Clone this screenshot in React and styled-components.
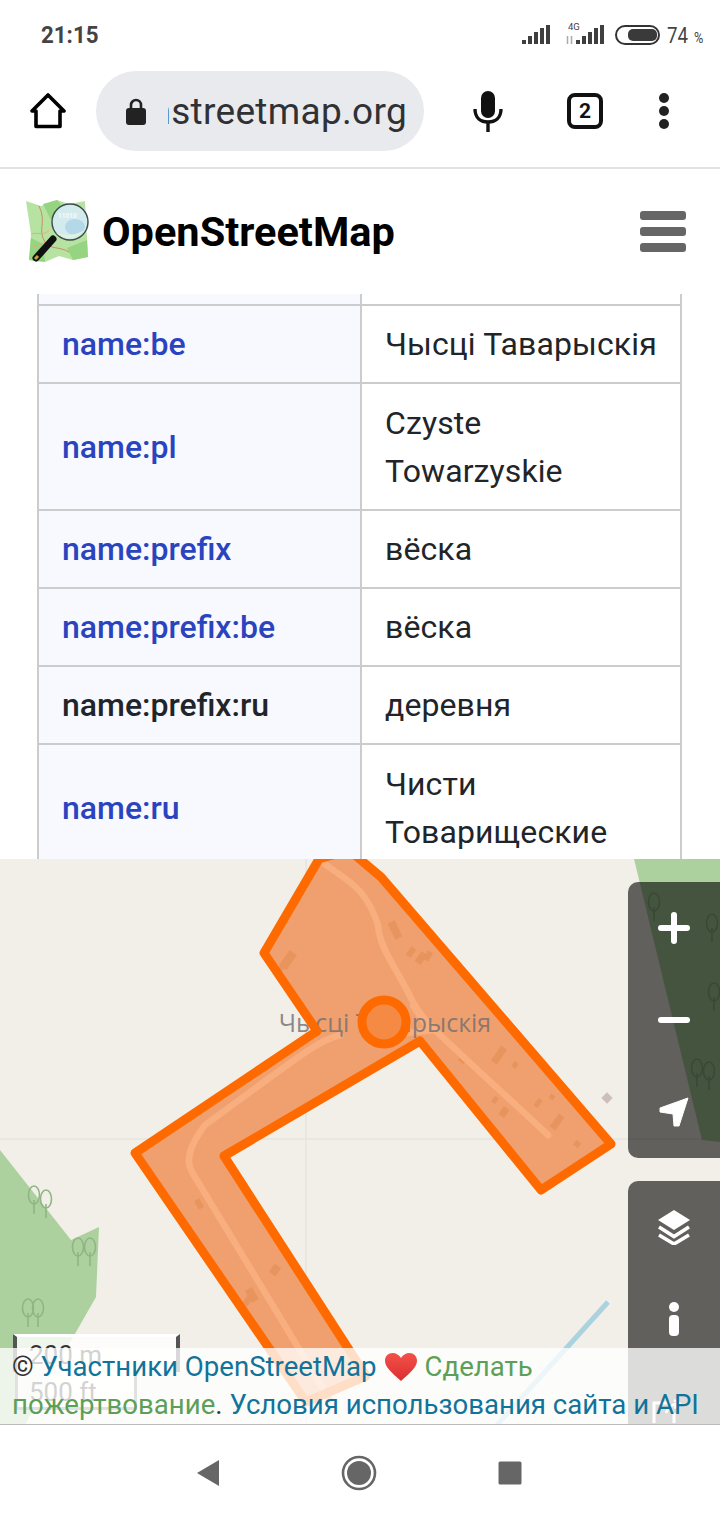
import React from "react"
import styled, { createGlobalStyle } from "styled-components"

const GlobalStyle = createGlobalStyle`
  html, body {
    margin: 0;
    padding: 0;
    background: #fff;
    font-family: Roboto, "Liberation Sans", sans-serif;
  }
`

const Page = styled.div`
  display: flex;
  flex-direction: column;
  width: 720px;
  height: 1520px;
  overflow: hidden;
  background: #fff;
`

const StatusBar = styled.div`
  display: flex;
  align-items: center;
  justify-content: space-between;
  height: 68px;
  padding: 2px 8px 0 41px;
  box-sizing: border-box;
  color: #444;
`

const Time = styled.span`
  font-size: 23px;
  font-weight: 700;
  transform: scaleX(0.97);
  transform-origin: left center;
`

const StatusIcons = styled.div`
  display: flex;
  align-items: center;
  gap: 7px;
`

const Battery = styled.span`
  width: 45px;
  font-size: 22px;
  white-space: nowrap;
  transform: scaleX(0.85);
  transform-origin: left center;
  small {
    font-size: 15px;
    margin-left: 7px;
  }
`

const Toolbar = styled.div`
  display: flex;
  align-items: center;
  height: 101px;
  box-sizing: border-box;
  padding: 0 0 13px 30px;
  border-bottom: 2px solid #e2e2e2;
`

const UrlPill = styled.div`
  display: flex;
  align-items: center;
  width: 328px;
  height: 80px;
  margin-left: 30px;
  padding-left: 29px;
  box-sizing: border-box;
  border-radius: 40px;
  background: #e9eaee;
`

const UrlClip = styled.div`
  display: flex;
  justify-content: flex-end;
  width: 239px;
  margin-left: 21px;
  overflow: hidden;
  font-size: 37px;
  color: #303134;
  white-space: nowrap;
  letter-spacing: 0.3px;
`

const TabCount = styled.div`
  display: flex;
  align-items: center;
  justify-content: center;
  width: 36px;
  height: 36px;
  margin-left: 64px;
  box-sizing: border-box;
  border: 4px solid #111;
  border-radius: 8px;
  font-size: 21px;
  font-weight: 700;
  color: #111;
`

const MicSlot = styled.div`
  display: flex;
  margin-left: 49px;
`

const MenuDots = styled.div`
  display: flex;
  flex-direction: column;
  gap: 3px;
  margin-left: 56px;
  i {
    width: 10px;
    height: 10px;
    border-radius: 50%;
    background: #222;
  }
`

const SiteHeader = styled.header`
  display: flex;
  align-items: center;
  height: 125px;
  padding: 0 34px 0 25px;
  box-sizing: border-box;
`

const SiteTitle = styled.div`
  margin-left: 11px;
  font-size: 41.5px;
  font-weight: 700;
  color: #000;
  flex: 1;
`

const Burger = styled.div`
  display: flex;
  flex-direction: column;
  gap: 7px;
  i {
    width: 46px;
    height: 9px;
    border-radius: 3px;
    background: #666;
  }
`

const TableArea = styled.div`
  height: 565px;
  padding-left: 37px;
  overflow: hidden;
`

const TagTable = styled.table`
  width: 645px;
  border-collapse: collapse;
  table-layout: fixed;
  font-size: 32px;
  line-height: 48px;
  color: #212529;
`

const Row = styled.tr`
  height: ${(p) => (p.$tall ? "127px" : p.$stub ? "11px" : "78px")};
`

const Key = styled.th`
  width: 323px;
  box-sizing: border-box;
  padding: 0 23px;
  border: 2px solid #ccc;
  ${(p) => p.$stub && "border-top: none;"}
  background: #f7f9fe;
  text-align: left;
  font-weight: 500;
  color: ${(p) => (p.$plain ? "#212529" : "#2a44bf")};
`

const Value = styled.td`
  padding: 0 22px 0 23px;
  border: 2px solid #ccc;
  ${(p) => p.$stub && "border-top: none;"}
  letter-spacing: 0.1px;
`

const MapArea = styled.div`
  position: relative;
  height: 566px;
  overflow: hidden;
  background: #f2efe9;
`

const MapDrawing = styled.svg`
  position: absolute;
  left: 0;
  top: 0;
`

const ControlPanel = styled.div`
  position: absolute;
  right: 0;
  top: ${(p) => p.$top}px;
  display: flex;
  flex-direction: column;
  width: 92px;
  height: ${(p) => p.$height}px;
  border-radius: ${(p) => (p.$open ? "10px 0 0 0" : "10px 0 0 10px")};
  background: rgba(0, 0, 0, 0.6);
`

const ControlButton = styled.div`
  display: flex;
  align-items: center;
  justify-content: center;
  width: 92px;
  height: 92px;
  flex: none;
  padding-right: ${(p) => p.$nudge || 0}px;
  box-sizing: border-box;
`

const ScaleLine = styled.div`
  position: absolute;
  left: ${(p) => p.$left}px;
  top: ${(p) => p.$top}px;
  width: ${(p) => p.$width}px;
  height: ${(p) => p.$height}px;
  box-sizing: border-box;
  padding: ${(p) => (p.$upper ? "0" : "2px")} 0 0 ${(p) => (p.$upper ? "12px" : "11px")};
  background: rgba(255, 255, 255, 0.8);
  border: solid #555;
  border-width: ${(p) => (p.$upper ? "3px 4px 0 4px" : "0 3px 3px 3px")};
  border-color: ${(p) => (p.$upper ? "#fff #555 #555 #555" : "#777")};
  font-size: 26px;
  line-height: 36px;
  color: #333;
`

const Attribution = styled.div`
  position: absolute;
  left: 0;
  right: 0;
  bottom: 0;
  height: 77px;
  padding-left: 12px;
  box-sizing: border-box;
  border-bottom: 1px solid #bbb;
  background: rgba(255, 255, 255, 0.78);
  font-size: 27.6px;
  line-height: 38px;
  color: #333;
`

const OsmLink = styled.span`
  color: ${(p) => (p.$green ? "#5d9f58" : "#11739a")};
`

const Heart = styled.svg`
  vertical-align: -5px;
  margin: 0 8px 0 8px;
`

const NavBar = styled.nav`
  display: flex;
  align-items: center;
  justify-content: center;
  height: 95px;
  padding-right: 2px;
  box-sizing: border-box;
  gap: 121px;
`

const rows = [
  { key: "name:be", value: "Чысці Таварыскія" },
  { key: "name:pl", value: "Czyste Towarzyskie", tall: true },
  { key: "name:prefix", value: "вёска" },
  { key: "name:prefix:be", value: "вёска" },
  { key: "name:prefix:ru", value: "деревня", plain: true },
  { key: "name:ru", value: "Чисти Товарищеские", tall: true },
]

// map shapes are in page coordinates, the viewBox shifts them into place
const outline =
  "319,859 349,850 381,877 611,1144 541,1190 420,1041 224,1156 366,1376 306,1402 135,1153 317,1031 264,953"

const trees = [
  [654, 907], [712, 928], [714, 997], [697, 1073], [709, 1076],
  [34, 1200], [46, 1204], [78, 1252], [90, 1252], [28, 1313], [38, 1313],
]

const houses = [
  [395, 930, 8, 18, -25], [421, 958, 7, 12, 35], [411, 952, 6, 10, 35], [428, 956, 6, 10, 30],
  [288, 960, 9, 18, 35], [281, 968, 5, 5, 35], [499, 1055, 7, 18, 35], [463, 1059, 7, 8, 35],
  [515, 1065, 5, 6, 35], [538, 1103, 5, 9, 35], [552, 1097, 5, 5, 35], [557, 1122, 7, 16, 35],
  [495, 1100, 5, 7, 35], [504, 1112, 7, 10, 35], [577, 1144, 6, 6, 40],
  [199, 1204, 6, 10, -30], [275, 1270, 8, 10, 35], [252, 1295, 8, 14, -30], [248, 1300, 6, 12, 35],
]

const MapCanvas = () => (
  <MapDrawing width="720" height="566" viewBox="0 859 720 566">
    <g stroke="#e7e4dd" strokeWidth="1.5">
      <line x1="0" y1="1139" x2="720" y2="1139" />
      <line x1="306" y1="859" x2="306" y2="1425" />
    </g>
    <polygon points="634,859 720,859 720,1142 702,1140" fill="#add19e" />
    <polygon
      points="0,1150 71,1240 99,1227 96,1297 60,1360 25,1425 0,1425"
      fill="#add19e"
    />
    <line x1="608" y1="1302" x2="497" y2="1425" stroke="#aad3df" strokeWidth="5" />
    {trees.map(([x, y], i) => (
      <g key={i} fill="none" stroke="#8fb583" strokeWidth="1.6">
        <ellipse cx={x} cy={y - 5} rx="5.5" ry="9" />
        <line x1={x} y1={y} x2={x} y2={y + 14} />
      </g>
    ))}
    <rect x="603" y="1094" width="8" height="8" transform="rotate(45 607 1098)" fill="#cdbfb8" />
    <polygon points={outline} fill="#f0a06e" />
    {houses.map(([x, y, w, h, r], i) => (
      <rect
        key={i}
        x={x - w / 2}
        y={y - h / 2}
        width={w}
        height={h}
        transform={`rotate(${r} ${x} ${y})`}
        fill="#e8945e"
      />
    ))}
    <g fill="none" stroke="#f8ae7e" strokeWidth="6.5" strokeLinecap="round" strokeLinejoin="round">
      <path d="M325 864 C345 880 365 885 378 925 C380 950 395 965 412 1000 C425 1025 430 1025 548 1135" />
      <path d="M340 1035 C320 1040 310 1048 205 1125 C190 1145 185 1160 192 1172 L330 1400" />
      <path d="M413 1006 L427 1026 M405 1033 L435 1030" />
    </g>
    <text
      x="385"
      y="1032"
      textAnchor="middle"
      fontFamily="'Open Sans', sans-serif"
      fontSize="25"
      fill="#6f6d70"
      fillOpacity="0.8"
    >
      Чысці Таварыскія
    </text>
    <polygon
      points={outline}
      fill="none"
      stroke="#ff6a00"
      strokeWidth="9"
      strokeLinejoin="round"
    />
    <circle cx="384" cy="1022" r="22" fill="#f58a45" stroke="#ff6a00" strokeWidth="9" />
  </MapDrawing>
)

const HomeIcon = () => (
  <svg width="36" height="36" viewBox="0 0 36 36" fill="none">
    <path d="M18 2 L34 18 H30 V33.5 H6 V18 H2 Z" stroke="#000" strokeWidth="3.6" strokeLinejoin="round" />
  </svg>
)

const LockIcon = () => (
  <svg width="22" height="27" viewBox="0 0 22 27">
    <path d="M6 11 V7 a5 5 0 0 1 10 0 V11" fill="none" stroke="#222" strokeWidth="2.6" />
    <rect x="1" y="10" width="20" height="17" rx="3" fill="#222" />
  </svg>
)

const MicIcon = () => (
  <svg width="30" height="41" viewBox="0 0 30 41" fill="none">
    <rect x="8" y="0" width="14" height="27" rx="7" fill="#111" />
    <path d="M2 18 C2 27 8 31 15 31 C22 31 28 27 28 18" stroke="#111" strokeWidth="3.4" />
    <line x1="15" y1="31" x2="15" y2="41" stroke="#111" strokeWidth="3.4" />
  </svg>
)

const SignalBars = () => (
  <g fill="#3f3f3f">
    <rect x="0" y="15" width="4" height="4" />
    <rect x="6" y="11" width="4" height="8" />
    <rect x="12" y="7" width="4" height="12" />
    <rect x="18" y="3" width="4" height="16" />
    <rect x="24" y="0" width="4" height="19" />
  </g>
)

const StatusGlyphs = () => (
  <svg width="138" height="26" viewBox="0 0 138 26">
    <g transform="translate(0 3)">
      <SignalBars />
    </g>
    <text x="46" y="8" fontSize="9.5" fontFamily="Roboto, sans-serif" fill="#444">4G</text>
    <path d="M45.5 14 v8 M49.5 14 v8" stroke="#aaa" strokeWidth="1.5" />
    <g transform="translate(54 3)">
      <SignalBars />
    </g>
    <rect x="94" y="4" width="43" height="18" rx="9" fill="none" stroke="#333" strokeWidth="2" />
    <rect x="106" y="7" width="29" height="12" rx="5" fill="#3a3a3a" />
  </svg>
)

const OsmLogo = () => (
  <svg width="66" height="68" viewBox="0 0 66 68">
    <path d="M1 3 L16 8 L32 2 L44 6 L60 3 L63 59 L48 62 L34 58 L20 64 L4 62 L6 36 Z" fill="#b6e3a2" />
    <path d="M18 6 L26 22 L36 6 L32 2 Z M42 50 L62 42 L63 59 L48 62 Z M6 40 L18 46 L20 64 L4 62 Z" fill="#95d480" />
    <path d="M14 8 C22 24 12 32 20 44 C26 52 34 48 44 54" fill="none" stroke="#c8905c" strokeWidth="1" />
    <path d="M6 36 C14 34 20 38 24 32 M20 44 L6 50" fill="none" stroke="#e0b070" strokeWidth="1" />
    <line x1="28" y1="41" x2="11" y2="60" stroke="#111" strokeWidth="7" strokeLinecap="round" />
    <line x1="13" y1="58" x2="10" y2="61" stroke="#c7a43a" strokeWidth="3" />
    <circle cx="45" cy="24" r="18" fill="#d4ebee" stroke="#3c4a4a" strokeWidth="1.4" />
    <ellipse cx="50" cy="29" rx="10" ry="8" fill="#b4d8e8" />
    <path d="M31 35 C38 42 52 42 60 31 C52 38 40 38 31 35 Z" fill="#e0f4da" />
    <text x="33" y="20" fontSize="6.5" fontWeight="700" fontFamily="Roboto, sans-serif" fill="#f4fafa">11010</text>
  </svg>
)

const PlusIcon = () => (
  <svg width="32" height="32" viewBox="0 0 32 32">
    <path d="M16 3 V29 M3 16 H29" stroke="#fff" strokeWidth="6" strokeLinecap="round" />
  </svg>
)

const MinusIcon = () => (
  <svg width="32" height="12" viewBox="0 0 32 12">
    <path d="M3 6 H29" stroke="#fff" strokeWidth="6" strokeLinecap="round" />
  </svg>
)

const LocateIcon = () => (
  <svg width="30" height="30" viewBox="0 0 30 30">
    <path d="M29 1 L20 29 L15 29 L14 17 L1 15 L1 11 Z" fill="#fff" stroke="#fff" strokeLinejoin="round" />
  </svg>
)

const LayersIcon = () => (
  <svg width="34" height="36" viewBox="0 0 34 36">
    <path d="M17 1 L33 11 L17 21 L1 11 Z" fill="#fff" />
    <path d="M2 18 L17 27.5 L32 18 M2 26 L17 35 L32 26" fill="none" stroke="#fff" strokeWidth="3.6" />
  </svg>
)

const InfoIcon = () => (
  <svg width="12" height="34" viewBox="0 0 12 34">
    <circle cx="6" cy="5" r="5" fill="#fff" />
    <rect x="1" y="13" width="10" height="21" rx="4" fill="#fff" />
  </svg>
)

const ShareIcon = () => (
  <svg width="30" height="24" viewBox="0 0 30 24" fill="none">
    <path d="M18 4 H2 V24 M22 24 V14" stroke="#fff" strokeWidth="3" />
    <path d="M14 14 C16 7 20 5 26 5 M22 1 L28 5 L22 9" stroke="#fff" strokeWidth="2.5" />
  </svg>
)

const App = () => (
  <Page>
    <GlobalStyle />
    <StatusBar>
      <Time>21:15</Time>
      <StatusIcons>
        <StatusGlyphs />
        <Battery>
          74<small>%</small>
        </Battery>
      </StatusIcons>
    </StatusBar>

    <Toolbar>
      <HomeIcon />
      <UrlPill>
        <LockIcon />
        <UrlClip>openstreetmap.org</UrlClip>
      </UrlPill>
      <MicSlot>
        <MicIcon />
      </MicSlot>
      <TabCount>2</TabCount>
      <MenuDots>
        <i />
        <i />
        <i />
      </MenuDots>
    </Toolbar>

    <SiteHeader>
      <OsmLogo />
      <SiteTitle>OpenStreetMap</SiteTitle>
      <Burger>
        <i />
        <i />
        <i />
      </Burger>
    </SiteHeader>

    <TableArea>
      <TagTable>
        <tbody>
          <Row $stub>
            <Key $stub />
            <Value $stub />
          </Row>
          {rows.map((row) => (
            <Row key={row.key} $tall={row.tall}>
              <Key $plain={row.plain}>{row.key}</Key>
              <Value>{row.value}</Value>
            </Row>
          ))}
        </tbody>
      </TagTable>
    </TableArea>

    <MapArea>
      <MapCanvas />
      <ControlPanel $top={23} $height={276}>
        <ControlButton>
          <PlusIcon />
        </ControlButton>
        <ControlButton>
          <MinusIcon />
        </ControlButton>
        <ControlButton>
          <LocateIcon />
        </ControlButton>
      </ControlPanel>
      <ControlPanel $top={322} $height={244} $open>
        <ControlButton>
          <LayersIcon />
        </ControlButton>
        <ControlButton>
          <InfoIcon />
        </ControlButton>
        <ControlButton $nudge={14}>
          <ShareIcon />
        </ControlButton>
      </ControlPanel>
      <ScaleLine $left={13} $top={475} $width={167} $height={38} $upper>
        200 m
      </ScaleLine>
      <ScaleLine $left={15} $top={513} $width={122} $height={38}>
        500 ft
      </ScaleLine>
      <Attribution>
        © <OsmLink>Участники OpenStreetMap</OsmLink>
        <Heart width="32" height="28" viewBox="0 0 32 28">
          <defs>
            <linearGradient id="heartFill" x1="0" y1="0" x2="0" y2="1">
              <stop offset="0" stopColor="#f4504a" />
              <stop offset="1" stopColor="#d92f2f" />
            </linearGradient>
          </defs>
          <path
            d="M16 28 C6 19 0 14 0 7.5 C0 3 3.5 0 7.5 0 C11 0 14.5 2 16 5 C17.5 2 21 0 24.5 0 C28.5 0 32 3 32 7.5 C32 14 26 19 16 28 Z"
            fill="url(#heartFill)"
          />
        </Heart>
        <OsmLink $green>Сделать пожертвование</OsmLink>. <OsmLink>Условия использования сайта и API</OsmLink>
      </Attribution>
    </MapArea>

    <NavBar>
      <svg width="24" height="26" viewBox="0 0 24 26">
        <path d="M23 0 V26 L1 13 Z" fill="#666" />
      </svg>
      <svg width="36" height="36" viewBox="0 0 36 36">
        <circle cx="18" cy="18" r="16" fill="none" stroke="#666" strokeWidth="2.6" />
        <circle cx="18" cy="18" r="12" fill="#666" />
      </svg>
      <svg width="24" height="24" viewBox="0 0 24 24">
        <rect x="0.5" y="0.5" width="23" height="23" rx="1.5" fill="#666" />
      </svg>
    </NavBar>
  </Page>
)

export default App
